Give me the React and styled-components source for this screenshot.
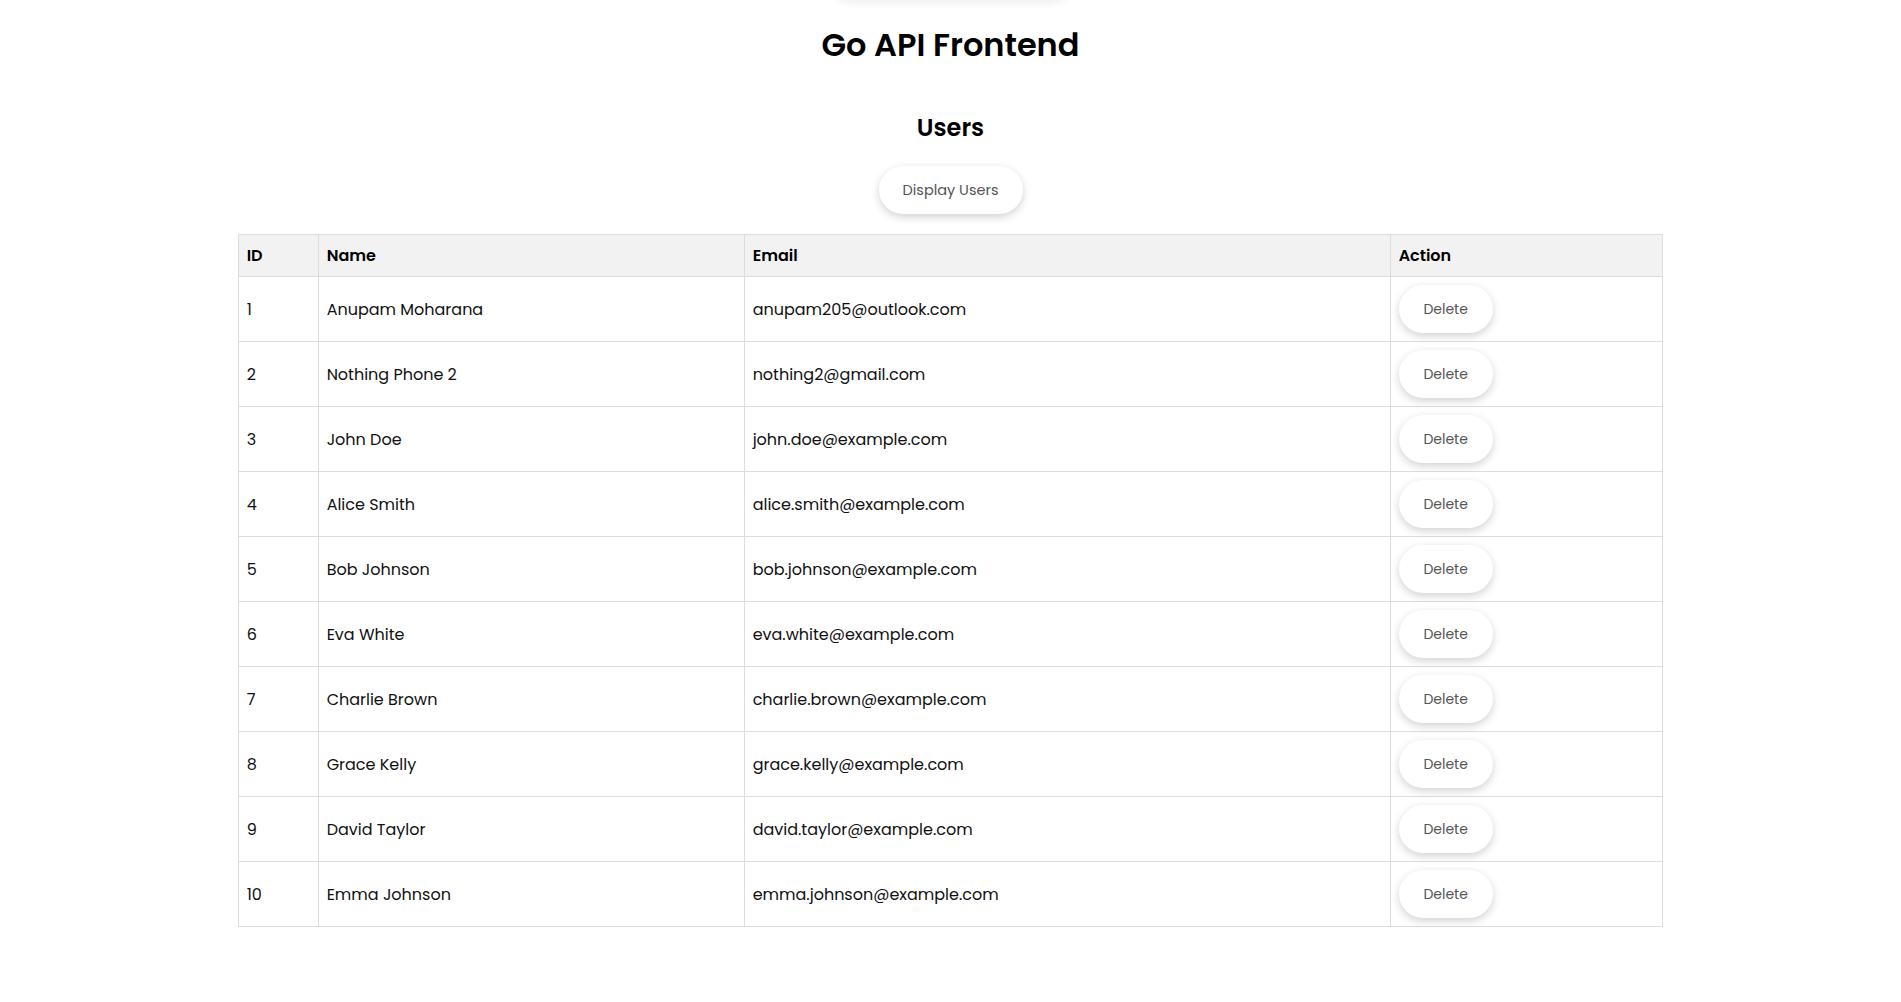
import styled, { createGlobalStyle } from 'styled-components';

const users = [
  { id: 1, name: 'Anupam Moharana', email: 'anupam205@outlook.com' },
  { id: 2, name: 'Nothing Phone 2', email: 'nothing2@gmail.com' },
  { id: 3, name: 'John Doe', email: 'john.doe@example.com' },
  { id: 4, name: 'Alice Smith', email: 'alice.smith@example.com' },
  { id: 5, name: 'Bob Johnson', email: 'bob.johnson@example.com' },
  { id: 6, name: 'Eva White', email: 'eva.white@example.com' },
  { id: 7, name: 'Charlie Brown', email: 'charlie.brown@example.com' },
  { id: 8, name: 'Grace Kelly', email: 'grace.kelly@example.com' },
  { id: 9, name: 'David Taylor', email: 'david.taylor@example.com' },
  { id: 10, name: 'Emma Johnson', email: 'emma.johnson@example.com' },
];

const columns = [
  { label: 'ID', width: '80px' },
  { label: 'Name', width: '426px' },
  { label: 'Email', width: '646px' },
  { label: 'Action', width: 'auto' },
];

const GlobalStyle = createGlobalStyle`
  body {
    margin: 0;
    background: #fff;
    font-family: Poppins, "DejaVu Sans", "Noto Sans", sans-serif;
    color: #111;
  }
`;

const App = () => {
  return (
    <>
      <GlobalStyle />
      <Page>
        <TopShadow />
        <Title>Go API Frontend</Title>
        <SubTitle>Users</SubTitle>
        <PillButton type="button">Display Users</PillButton>
        <Table>
          <thead>
            <tr>
              {columns.map((c) => (
                <Th key={c.label} $width={c.width}>
                  {c.label}
                </Th>
              ))}
            </tr>
          </thead>
          <tbody>
            {users.map((u) => (
              <tr key={u.id}>
                <Td>{u.id}</Td>
                <Td>{u.name}</Td>
                <Td>{u.email}</Td>
                <Td>
                  <PillButton type="button" $small>
                    Delete
                  </PillButton>
                </Td>
              </tr>
            ))}
          </tbody>
        </Table>
      </Page>
    </>
  );
};

const Page = styled.div`
  display: flex;
  flex-direction: column;
  align-items: center;
  padding-bottom: 60px;
`;

// shadow of the pill that sits just above the visible area
const TopShadow = styled.div`
  width: 240px;
  height: 40px;
  margin-top: -40px;
  border-radius: 24px;
  background: #fff;
  box-shadow: 0 2px 10px rgba(0, 0, 0, 0.08);
`;

const Title = styled.h1`
  margin: 21px 0;
  font-size: 32px;
  line-height: 48px;
  font-weight: 600;
  color: #000;
`;

const SubTitle = styled.h2`
  margin: 20px 0;
  font-size: 24px;
  line-height: 36px;
  font-weight: 600;
  color: #000;
`;

const PillButton = styled.button`
  height: 48px;
  min-width: ${(p) => (p.$small ? '94px' : '144px')};
  padding: 0 ${(p) => (p.$small ? '20px' : '22px')};
  margin-bottom: ${(p) => (p.$small ? '0' : '20px')};
  border: none;
  border-radius: 24px;
  background: #fff;
  color: #555;
  font-family: inherit;
  font-size: ${(p) => (p.$small ? '14px' : '14.5px')};
  box-shadow: 0 3px 8px rgba(0, 0, 0, 0.18);
  cursor: pointer;
`;

const Table = styled.table`
  width: 75%;
  border-collapse: collapse;
  table-layout: fixed;
`;

const Th = styled.th`
  width: ${(p) => p.$width};
  height: 42px;
  box-sizing: border-box;
  padding: 8px;
  border: 1px solid #ddd;
  background: #f2f2f2;
  text-align: left;
  font-size: 16px;
  font-weight: 600;
  color: #000;
`;

const Td = styled.td`
  padding: 8px;
  border: 1px solid #ddd;
  text-align: left;
  font-size: 16px;
  color: #111;
`;

export default App;
